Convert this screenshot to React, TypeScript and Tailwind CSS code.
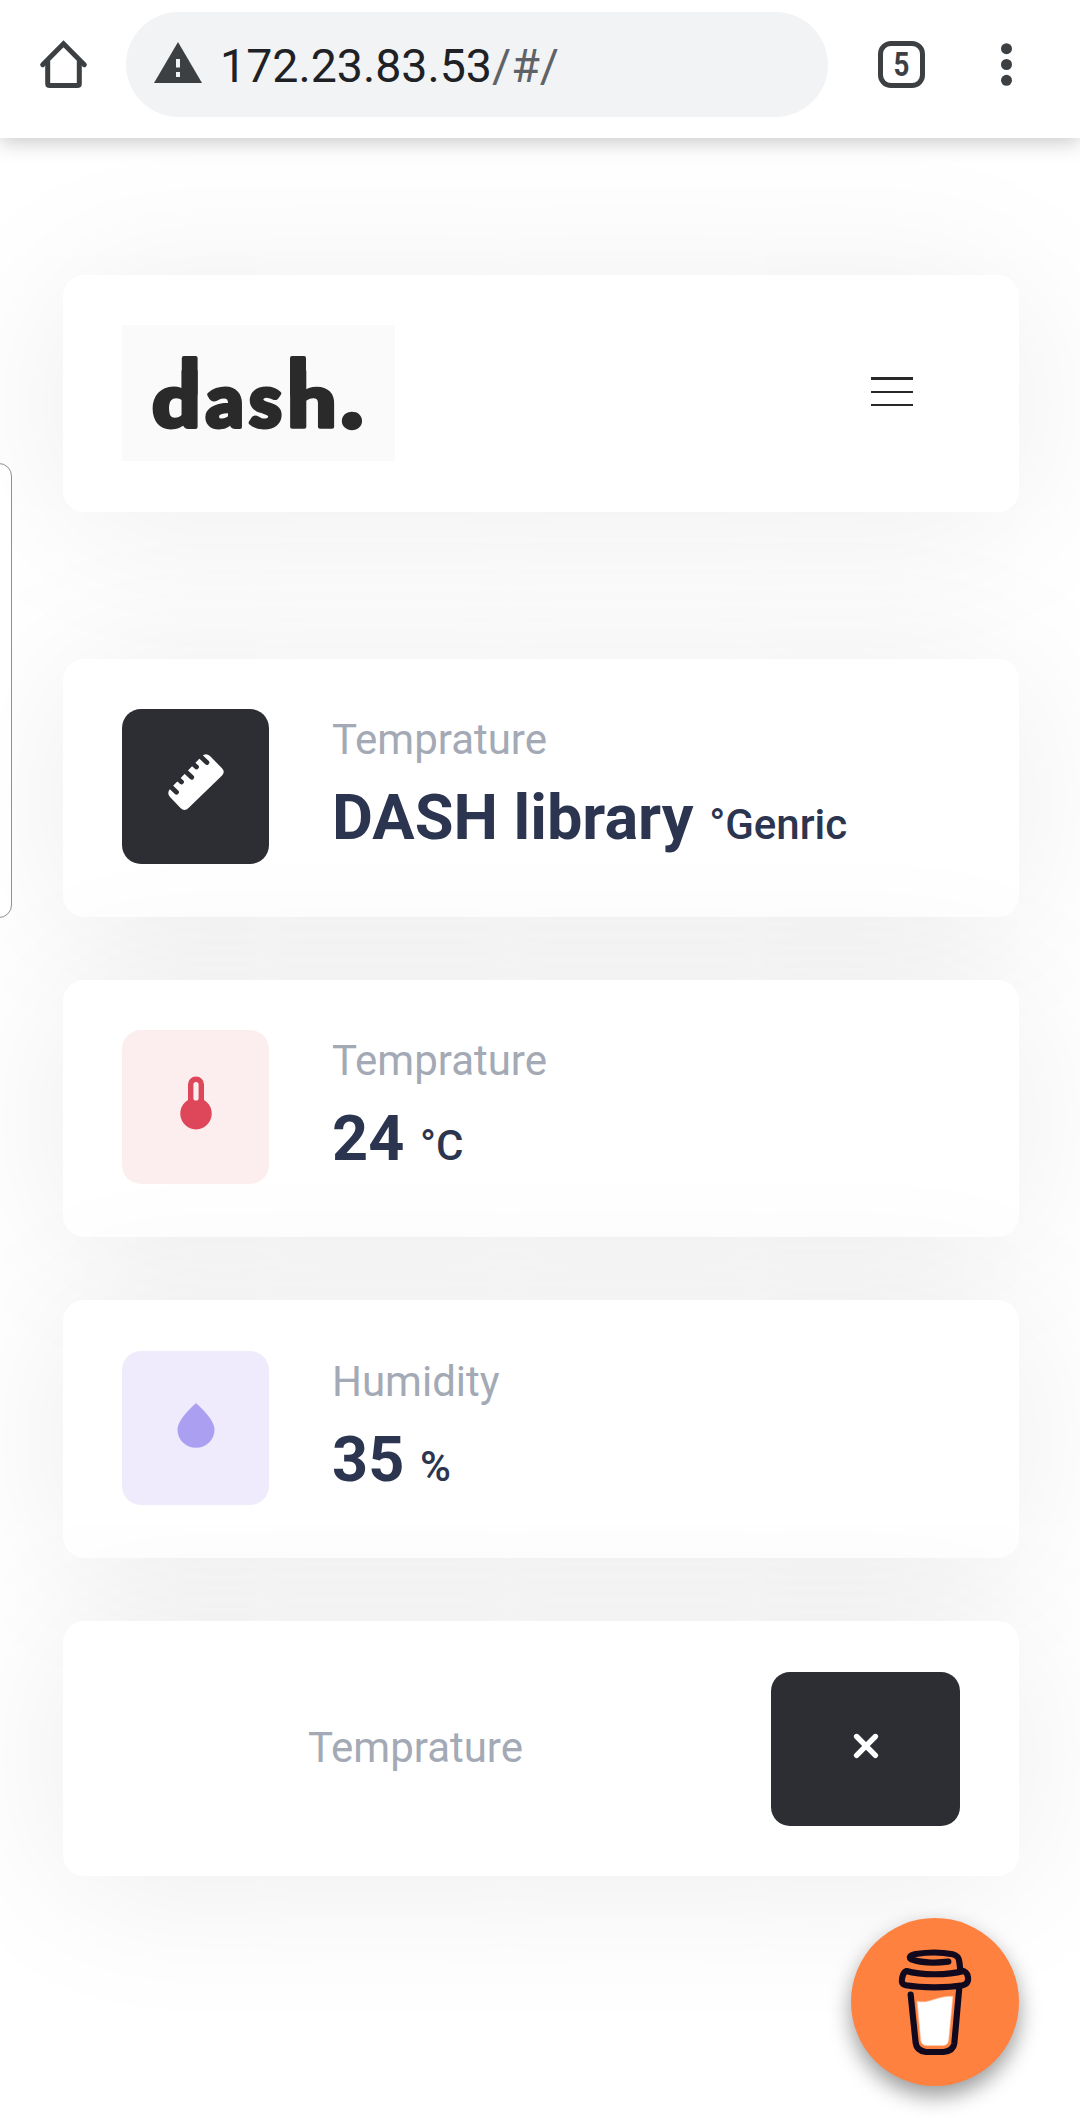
import type { ReactNode } from "react";

function BrowserBar() {
  return (
    <header className="relative z-10 flex h-[138px] items-start bg-white shadow-[0_4px_20px_rgba(0,0,0,0.22)]">
      <svg className="ml-9 mt-9 h-14 w-14 shrink-0" viewBox="36 36 56 56" fill="none" stroke="#3c4043" strokeWidth="5">
        <path d="M47.7 61V83.5Q47.7 85.6 49.8 85.6H77.2Q79.3 85.6 79.3 83.5V61" />
        <path d="M42.7 64.7L63.5 43.8L84.3 64.7" strokeLinecap="round" strokeWidth="5" />
      </svg>
      <div className="ml-[34px] mt-3 flex h-[105px] w-[702px] shrink-0 items-center rounded-full bg-[#f1f3f4] pl-7">
        <svg className="-mt-[5px] h-[41px] w-12 shrink-0" viewBox="0 0 48 41">
          <path d="M24 0L48 41H0Z" fill="#3c4043" />
          <path d="M22 17h4v8.500h-4zM22 30h4v5h-4z" fill="#f1f3f4" />
        </svg>
        <span className="ml-[18px] mt-[2px] whitespace-nowrap text-[46.5px] leading-[56px] text-[#202124]">
          172.23.83.53<span className="text-[#5f6368]">/#/</span>
        </span>
      </div>
      <div className="ml-[50px] mt-[41px] flex h-[47px] w-[47px] shrink-0 items-center justify-center rounded-[13px] border-[5px] border-[#3c4043] text-[33px] font-bold leading-none text-[#3c4043]">
        <span className="inline-block scale-x-[0.84] pb-px">5</span>
      </div>
      <svg className="ml-[70px] mt-[41px] h-12 w-6 shrink-0" viewBox="0 0 24 48" fill="#3c4043">
        <circle cx="11.500" cy="7.700" r="5.500" />
        <circle cx="11.500" cy="23.500" r="5.500" />
        <circle cx="11.500" cy="39.300" r="5.500" />
      </svg>
    </header>
  );
}

const wordmarkLetters = [
  { char: "d", x: 152.2, stretch: 1.12, size: 75, outline: 4 },
  { char: "a", x: 205.7, stretch: 0.99, size: 75, outline: 4 },
  { char: "s", x: 249.1, stretch: 0.99, size: 75, outline: 4 },
  { char: "h", x: 287.2, stretch: 1.16, size: 75, outline: 3.6 },
  { char: ".", x: 341.5, stretch: 1.07, size: 82, outline: 5.5 },
];

function Wordmark() {
  return (
    <svg className="h-[136px] w-[273px]" viewBox="122 325 273 136" role="img" aria-label="dash.">
      <rect x="122" y="325" width="273" height="136" fill="#fafafa" />
      <g
        fontFamily="Lato, sans-serif"
        fontWeight="900"
        fill="#2a2a2a"
        stroke="#2a2a2a"
        strokeLinejoin="round"
      >
        {wordmarkLetters.map(({ char, x, stretch, size, outline }) => (
          <text
            key={char}
            transform={`translate(${x} 427) scale(${stretch} 1)`}
            fontSize={size}
            strokeWidth={outline}
          >
            {char}
          </text>
        ))}
      </g>
      <g fill="#2a2a2a">
        <rect x="181.800" y="356" width="15.800" height="40" rx="2" />
        <rect x="290" y="356" width="16" height="40" rx="2" />
      </g>
    </svg>
  );
}

function RulerIcon() {
  return (
    <svg className="h-[60px] w-[60px]" viewBox="165.500 752.500 60 60">
      <path
        d="M201.500 756.500Q205.500 752.800 209.500 756.500L221.300 768.500Q225.200 772.300 221.300 776.200L188 808.500Q184 812.300 180 808.500L169.500 797.500Q166 793.700 169.500 789.500Z"
        fill="#fff"
      />
      <path
        d="M168.500 785.500L176 792.700M176 778L181 782.500M183.500 770.500L191.200 777.800M191 763L196 767.500M198.500 755.500L206.400 763"
        stroke="#2d2e33"
        strokeWidth="4.800"
        strokeLinecap="round"
      />
    </svg>
  );
}

function ThermometerIcon() {
  return (
    <svg className="h-[60px] w-[60px]" viewBox="165.500 1073.500 60 60">
      <path
        d="M187.500 1100.400V1085a8 8 0 0 1 16 0V1100.400a15.700 15.900 0 1 1-16 0ZM192.900 1085V1098.500a2.600 2.600 0 0 0 5.200 0V1085a2.600 2.600 0 0 0-5.200 0Z"
        fill="#de4759"
        fillRule="evenodd"
      />
    </svg>
  );
}

function DropletIcon() {
  return (
    <svg className="h-[60px] w-[60px]" viewBox="165.500 1394.500 60 60">
      <path
        d="M195.500 1403.500C202 1409.500 214 1421 214 1430.500A18.500 17.800 0 0 1 177 1430.500C177 1421 189 1409.500 195.500 1403.500Z"
        fill="#ab9ff2"
      />
    </svg>
  );
}

function Card({ children, className }: { children: ReactNode; className: string }) {
  return (
    <section
      className={`flex w-[956px] shrink-0 rounded-[21px] bg-white shadow-[0_10px_158px_rgba(0,0,0,0.08)] ${className}`}
    >
      {children}
    </section>
  );
}

type StatProps = {
  icon: ReactNode;
  tile: string;
  label: string;
  value: string;
  unit: string;
  className: string;
};

function StatCard({ icon, tile, label, value, unit, className }: StatProps) {
  return (
    <Card className={`pl-[59px] ${className}`}>
      <div className={`flex w-[147px] shrink-0 justify-center rounded-[19px] pt-[43px] ${tile}`}>{icon}</div>
      <div className="ml-[63px] pt-[6px]">
        <p className="text-[42px] leading-[50px] text-[#a3a9b5]">{label}</p>
        <p className="mt-[15px] whitespace-nowrap text-[63px] font-bold leading-[76px] text-[#2c3550]">
          {value} <span className="text-[42px] font-medium">{unit}</span>
        </p>
      </div>
    </Card>
  );
}

function CoffeeButton() {
  return (
    <button
      aria-label="Buy me a coffee"
      className="absolute left-[851px] top-[1918px] h-[168px] w-[168px] rounded-full bg-[#ff813f] shadow-[0_10px_21px_rgba(0,0,0,0.4)]"
    >
      <svg className="h-[168px] w-[168px]" viewBox="93 114 504 504" fill="none">
        <path d="M291 363C325 374 355 345 399 349L386 482Q383 497 367 497H322Q305 497 302 482Z" fill="#fff" stroke="#ffb88f" strokeWidth="2" />
        <g stroke="#110a1e" strokeWidth="18.500" strokeLinecap="round" strokeLinejoin="round">
          <path d="M385 245C345 250 300 247 276 239C263 233 270 226 287 222C325 216 370 217 398 223C414 227 417 235 418 246L421 270" />
          <path d="M259 273C302 286 385 286 431 273C443 278 445 291 444 302C441 312 437 314 428 316C382 324 306 324 258 316C247 313 244 307 246 297C248 286 248 278 259 273Z" />
          <path d="M272 344L287 489Q290 512 318 516H370Q400 513 403 490L418 322" />
        </g>
      </svg>
    </button>
  );
}

export default function App() {
  return (
    <div
      className="relative h-[2118px] w-[1080px] overflow-hidden bg-white"
      style={{ fontFamily: "Roboto, sans-serif" }}
    >
      <BrowserBar />
      <main className="flex flex-col items-start pl-[63px] pt-[137px]">
        <Card className="h-[237px] items-start justify-between pl-[59px] pr-[106px] pt-[50px]">
          <Wordmark />
          <div className="flex w-[42px] flex-col pt-[52px]">
            <span className="h-[3px] bg-[#282828]" />
            <span className="mt-[11px] h-[2px] bg-[#282828]" />
            <span className="mt-[11px] h-[2px] bg-[#282828]" />
          </div>
        </Card>
        <StatCard
          className="mt-[147px] h-[258px] pt-[50px]"
          tile="h-[155px] bg-[#2d2e33]"
          icon={<RulerIcon />}
          label="Temprature"
          value="DASH library"
          unit="°Genric"
        />
        <StatCard
          className="mt-[63px] h-[257px] pt-[50px]"
          tile="h-[154px] bg-[#fceeee]"
          icon={<ThermometerIcon />}
          label="Temprature"
          value="24"
          unit="°C"
        />
        <StatCard
          className="mt-[63px] h-[258px] pt-[51px]"
          tile="h-[154px] bg-[#efebfd]"
          icon={<DropletIcon />}
          label="Humidity"
          value="35"
          unit="%"
        />
        <Card className="mt-[63px] h-[255px] items-start justify-between pl-[245px] pr-[59px] pt-[51px]">
          <p className="pt-[51px] text-[42px] leading-[50px] text-[#a3a9b5]">Temprature</p>
          <button
            aria-label="Close"
            className="flex h-[154px] w-[189px] items-start justify-center rounded-[19px] bg-[#2d2e33] pt-[58px]"
          >
            <svg className="h-8 w-8" viewBox="0 0 32 32">
              <path d="M6.600 6.500L25.400 25.300M25.400 6.500L6.600 25.300" stroke="#fff" strokeWidth="5.400" strokeLinecap="round" />
            </svg>
          </button>
        </Card>
      </main>
      <div className="absolute -left-[14px] top-[463px] h-[455px] w-[26px] rounded-r-[13px] border border-[#8f8f8f] bg-white/70" />
      <CoffeeButton />
    </div>
  );
}
